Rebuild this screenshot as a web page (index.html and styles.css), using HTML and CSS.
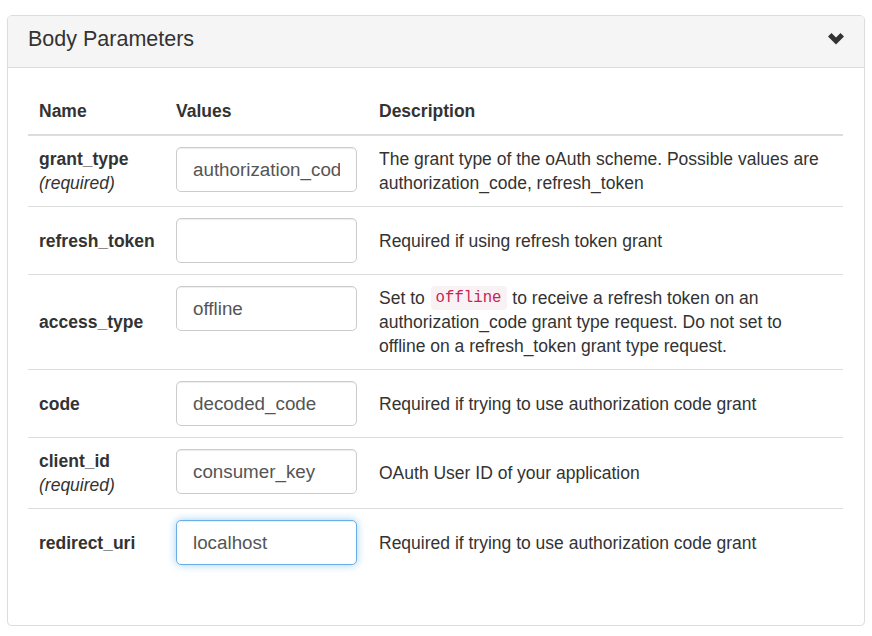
FILE: index.html
```html
<!DOCTYPE html>
<html>
<head>
<meta charset="utf-8">
<link rel="stylesheet" href="styles.css">
</head>
<body>
<div class="panel">
  <div class="panel-heading">
    <h3 class="panel-title">Body Parameters</h3>
    <svg class="chevron" width="16" height="12" viewBox="0 0 16 12"><polygon points="0,3.5 3.5,0 8,4.5 12.5,0 16,3.5 8,11.5" fill="#333"/></svg>
  </div>
  <div class="panel-body">
    <table class="params">
      <colgroup><col class="c-name"><col class="c-val"><col class="c-desc"></colgroup>
      <thead>
        <tr><th>Name</th><th>Values</th><th>Description</th></tr>
      </thead>
      <tbody>
        <tr>
          <td class="name"><b>grant_type</b><br><i class="req">(required)</i></td>
          <td class="val"><input class="field" type="text" value="authorization_code"></td>
          <td class="desc">The grant type of the oAuth scheme. Possible values are authorization_code, refresh_token</td>
        </tr>
        <tr>
          <td class="name"><b>refresh_token</b></td>
          <td class="val"><input class="field" type="text" value=""></td>
          <td class="desc">Required if using refresh token grant</td>
        </tr>
        <tr>
          <td class="name"><b>access_type</b></td>
          <td class="val"><input class="field" type="text" value="offline"></td>
          <td class="desc">Set to <code class="code">offline</code> to receive a refresh token on an authorization_code grant type request. Do not set to offline on a refresh_token grant type request.</td>
        </tr>
        <tr>
          <td class="name"><b>code</b></td>
          <td class="val"><input class="field" type="text" value="decoded_code"></td>
          <td class="desc">Required if trying to use authorization code grant</td>
        </tr>
        <tr>
          <td class="name"><b>client_id</b><br><i class="req">(required)</i></td>
          <td class="val"><input class="field" type="text" value="consumer_key"></td>
          <td class="desc">OAuth User ID of your application</td>
        </tr>
        <tr>
          <td class="name"><b>redirect_uri</b></td>
          <td class="val"><input class="field focus" type="text" value="localhost"></td>
          <td class="desc">Required if trying to use authorization code grant</td>
        </tr>
      </tbody>
    </table>
  </div>
</div>
</body>
</html>
```
FILE: styles.css
```css
* { box-sizing: border-box; }
html, body { margin: 0; padding: 0; background: #fff; }
body {
  font-family: "Liberation Sans", Arial, sans-serif;
  font-size: 17.5px;
  line-height: 24px;
  color: #333;
  padding: 15px 7px 0 7px;
}
.panel {
  width: 858px;
  border: 1px solid #ddd;
  border-radius: 5px;
  background: #fff;
  box-shadow: 0 1px 1px rgba(0,0,0,.05);
}
.panel-heading {
  display: flex;
  align-items: center;
  justify-content: space-between;
  padding: 8px 20px 13px 20px;
  background: #f5f5f5;
  border-bottom: 1px solid #ddd;
  border-radius: 4px 4px 0 0;
}
.panel-title {
  margin: 0;
  font-size: 21.5px;
  font-weight: normal;
  line-height: 30px;
  color: #333;
}
.chevron { display: block; margin-top: -1px; }
.panel-body {
  padding: 21px 21px 49px 20px;
}
.params {
  width: 100%;
  border-collapse: collapse;
  table-layout: fixed;
}
.c-name { width: 137px; }
.c-val { width: 203px; }
.params th {
  text-align: left;
  font-weight: bold;
  padding: 10px 11px 11px 11px;
  border-bottom: 2px solid #ddd;
  vertical-align: bottom;
}
.params td {
  padding: 11px 11px;
  border-top: 1px solid #ddd;
  vertical-align: middle;
}
.params tbody tr:first-child td { border-top: 0; }
.params td.val { vertical-align: top; }
.req { color: #333; }
.field {
  display: block;
  width: 181px;
  height: 45px;
  padding: 0 16px;
  border: 1px solid #ccc;
  border-radius: 5px;
  font-family: "Liberation Sans", Arial, sans-serif;
  font-size: 18.8px;
  color: #555;
  background: #fff;
  box-shadow: inset 0 1px 1px rgba(0,0,0,.075);
  outline: none;
}
.field.focus {
  border-color: #66afe9;
  box-shadow: inset 0 1px 1px rgba(0,0,0,.075), 0 0 8px rgba(102,175,233,.6);
}
.code {
  display: inline-block;
  font-family: "Liberation Mono", "DejaVu Sans Mono", monospace;
  font-size: 15.7px;
  line-height: 24px;
  height: 24px;
  color: #c7254e;
  background: #f9f2f4;
  padding: 0 5px;
  margin: 0 1px;
  border-radius: 4px;
  vertical-align: top;
}
```
